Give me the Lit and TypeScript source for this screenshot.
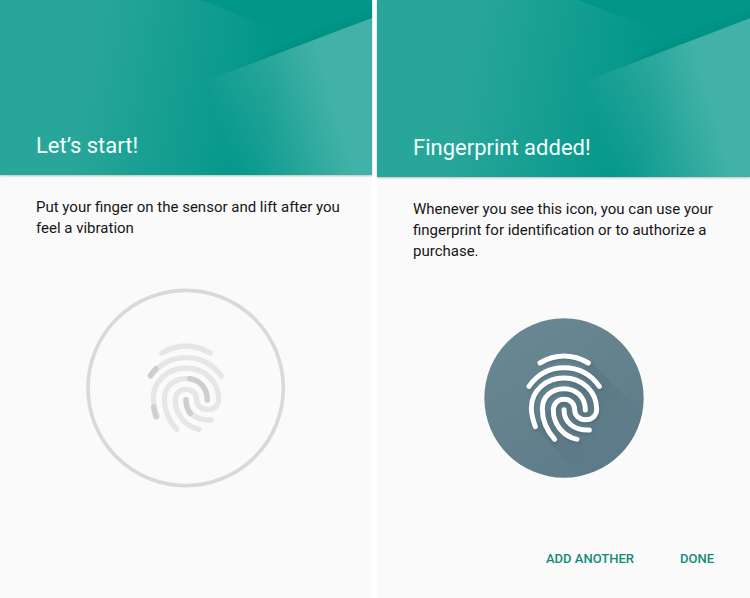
import { LitElement, html, svg, css } from "lit";
import { customElement, property } from "lit/decorators.js";

const RIDGES = [
  "M66 57C89 43 112 36 138 36C165 36 188 43 211 57",
  "M33 127C58 91 95 71 138 71C182 71 219 91 244 127",
  "M52 248C44 226 40 210 40 192C40 140 85 102 138 102C195 102 236 145 236 195C236 215 222 227 203 227C184 227 170 214 170 197C170 178 156 166 138 166C119 166 106 180 106 199C106 240 135 277 177 286",
  "M110 286C85 258 73 228 73 195C73 158 102 134 138 134C175 134 202 160 202 198",
  "M138 197C138 235 168 260 214 258",
];

const ACTIVE_RIDGES = [
  "M31 125C36 117 41 111 48 104",
  "M48 248C44 236 42 228 41 219",
  "M149 134C181 139 202 163 202 198",
  "M138 197C138 213 142 227 151 239",
];

const ridges = (paths: string[]) => paths.map((d) => svg`<path d=${d}></path>`);

@customElement("setup-header")
class SetupHeader extends LitElement {
  @property() heading = "";

  static styles = css`
    :host {
      display: grid;
      position: relative;
      z-index: 1;
      align-items: end;
      overflow: hidden;
      background: #009688;
    }
    .art {
      position: absolute;
      inset: 0;
      width: 100%;
      height: 100%;
    }
    .title {
      position: relative;
      margin: 0;
      padding: 0 36px 15px;
      color: #f4fffd;
      font: 400 22px/28px Roboto, sans-serif;
    }
  `;

  render() {
    return html`
      <svg class="art" viewBox="0 0 372 175" preserveAspectRatio="none" aria-hidden="true">
        <defs>
          <linearGradient id="base" gradientUnits="userSpaceOnUse" x1="88" y1="66" x2="270" y2="98">
            <stop offset="0" stop-color="#28a699"></stop>
            <stop offset="1" stop-color="#009688"></stop>
          </linearGradient>
          <linearGradient id="light" gradientUnits="userSpaceOnUse" x1="214" y1="114" x2="326" y2="80">
            <stop offset="0" stop-color="#fff" stop-opacity="0"></stop>
            <stop offset="1" stop-color="#fff" stop-opacity=".26"></stop>
          </linearGradient>
          <linearGradient id="shade" gradientUnits="userSpaceOnUse" x1="310" y1="41" x2="306" y2="30">
            <stop offset="0" stop-color="#00564c" stop-opacity=".08"></stop>
            <stop offset="1" stop-color="#00564c" stop-opacity="0"></stop>
          </linearGradient>
        </defs>
        <path fill="url(#base)" d="M0 0H372V175H0z"></path>
        <path fill="#009688" d="M200 0H372V18L262 60L290 34z"></path>
        <path fill="url(#shade)" d="M372 18V0L240 68z"></path>
        <path fill="url(#light)" d="M372 18L205 81V175H372z"></path>
      </svg>
      <h1 class="title">${this.heading}</h1>
    `;
  }
}

@customElement("scan-progress")
class ScanProgress extends LitElement {
  static styles = css`
    :host { display: block; }
    .icon { display: block; width: 200px; height: 200px; }
    .ring { fill: none; stroke: #d9d9d9; stroke-width: 11; }
    .idle, .active { fill: none; stroke-width: 16; stroke-linecap: round; }
    .idle { stroke: #e6e6e6; }
    .active { stroke: #cecece; }
  `;

  render() {
    return html`
      <svg class="icon" viewBox="0 0 600 600" role="img" aria-label="Fingerprint scan progress">
        <circle class="ring" cx="299" cy="300" r="293"></circle>
        <g transform="translate(162 138)">
          <g class="idle">${ridges(RIDGES)}</g>
          <g class="active">${ridges(ACTIVE_RIDGES)}</g>
        </g>
      </svg>
    `;
  }
}

@customElement("fingerprint-badge")
class FingerprintBadge extends LitElement {
  static styles = css`
    :host { display: block; }
    .icon { display: block; width: 160px; height: 160px; }
    .lines { fill: none; stroke: #fff; stroke-width: 15; stroke-linecap: round; }
    .drop { fill: none; stroke: #2f4a55; stroke-width: 14; stroke-linecap: round; opacity: .3; }
  `;

  render() {
    return html`
      <svg class="icon" viewBox="0 0 480 480" role="img" aria-label="Fingerprint">
        <defs>
          <linearGradient id="disc" x1="0.2" y1="0" x2="0.8" y2="1">
            <stop offset="0" stop-color="#6a8893"></stop>
            <stop offset="1" stop-color="#5d7b88"></stop>
          </linearGradient>
          <linearGradient id="cast" gradientUnits="userSpaceOnUse" x1="240" y1="240" x2="372" y2="372">
            <stop offset="0" stop-color="#37525e" stop-opacity=".18"></stop>
            <stop offset="1" stop-color="#37525e" stop-opacity=".03"></stop>
          </linearGradient>
          <clipPath id="round"><circle cx="240" cy="240" r="239"></circle></clipPath>
          <filter id="soft" x="-20%" y="-20%" width="140%" height="140%">
            <feGaussianBlur stdDeviation="4"></feGaussianBlur>
          </filter>
        </defs>
        <circle cx="240" cy="240" r="239" fill="url(#disc)"></circle>
        <path clip-path="url(#round)" fill="url(#cast)" d="M318 130L520 332V520H338L152 330z"></path>
        <g transform="translate(104 84)" class="drop" filter="url(#soft)">${ridges(RIDGES)}</g>
        <g transform="translate(102 78)" class="lines">${ridges(RIDGES)}</g>
      </svg>
    `;
  }
}

@customElement("app-root")
class AppRoot extends LitElement {
  static styles = css`
    :host {
      display: block;
      background: #fff;
      font-family: Roboto, sans-serif;
    }
    .screens {
      display: grid;
      grid-template-columns: 372fr 373fr;
      column-gap: 5px;
      min-height: 100vh;
    }
    .screen {
      display: flex;
      flex-direction: column;
      min-width: 0;
      background: #fafafa;
    }
    .header {
      height: 175px;
      flex: none;
      box-shadow: 0 1px 2px rgba(0, 0, 0, .25);
    }
    .added .header { height: 177px; }
    .message {
      margin: 0;
      padding: 22px 24px 0 36px;
      color: #161616;
      font-size: 15px;
      line-height: 21px;
    }
    .figure {
      display: grid;
      justify-content: center;
      padding-top: 49px;
    }
    .added .figure { padding-top: 56px; }
    .actions {
      display: flex;
      justify-content: flex-end;
      gap: 46px;
      margin-top: auto;
      padding: 24px 36px 27px;
    }
    .action {
      margin: 0;
      padding: 0;
      border: 0;
      background: none;
      color: #138a7b;
      font: 500 13px/24px Roboto, sans-serif;
      text-transform: uppercase;
      cursor: pointer;
    }
  `;

  render() {
    return html`
      <main class="screens">
        <section class="screen">
          <setup-header class="header" heading="Let’s start!"></setup-header>
          <p class="message">Put your finger on the sensor and lift after you feel a vibration</p>
          <div class="figure"><scan-progress></scan-progress></div>
        </section>
        <section class="screen added">
          <setup-header class="header" heading="Fingerprint added!"></setup-header>
          <p class="message">Whenever you see this icon, you can use your fingerprint for identification or to authorize a purchase.</p>
          <div class="figure"><fingerprint-badge></fingerprint-badge></div>
          <div class="actions">
            <button class="action" type="button">Add another</button>
            <button class="action" type="button">Done</button>
          </div>
        </section>
      </main>
    `;
  }
}
